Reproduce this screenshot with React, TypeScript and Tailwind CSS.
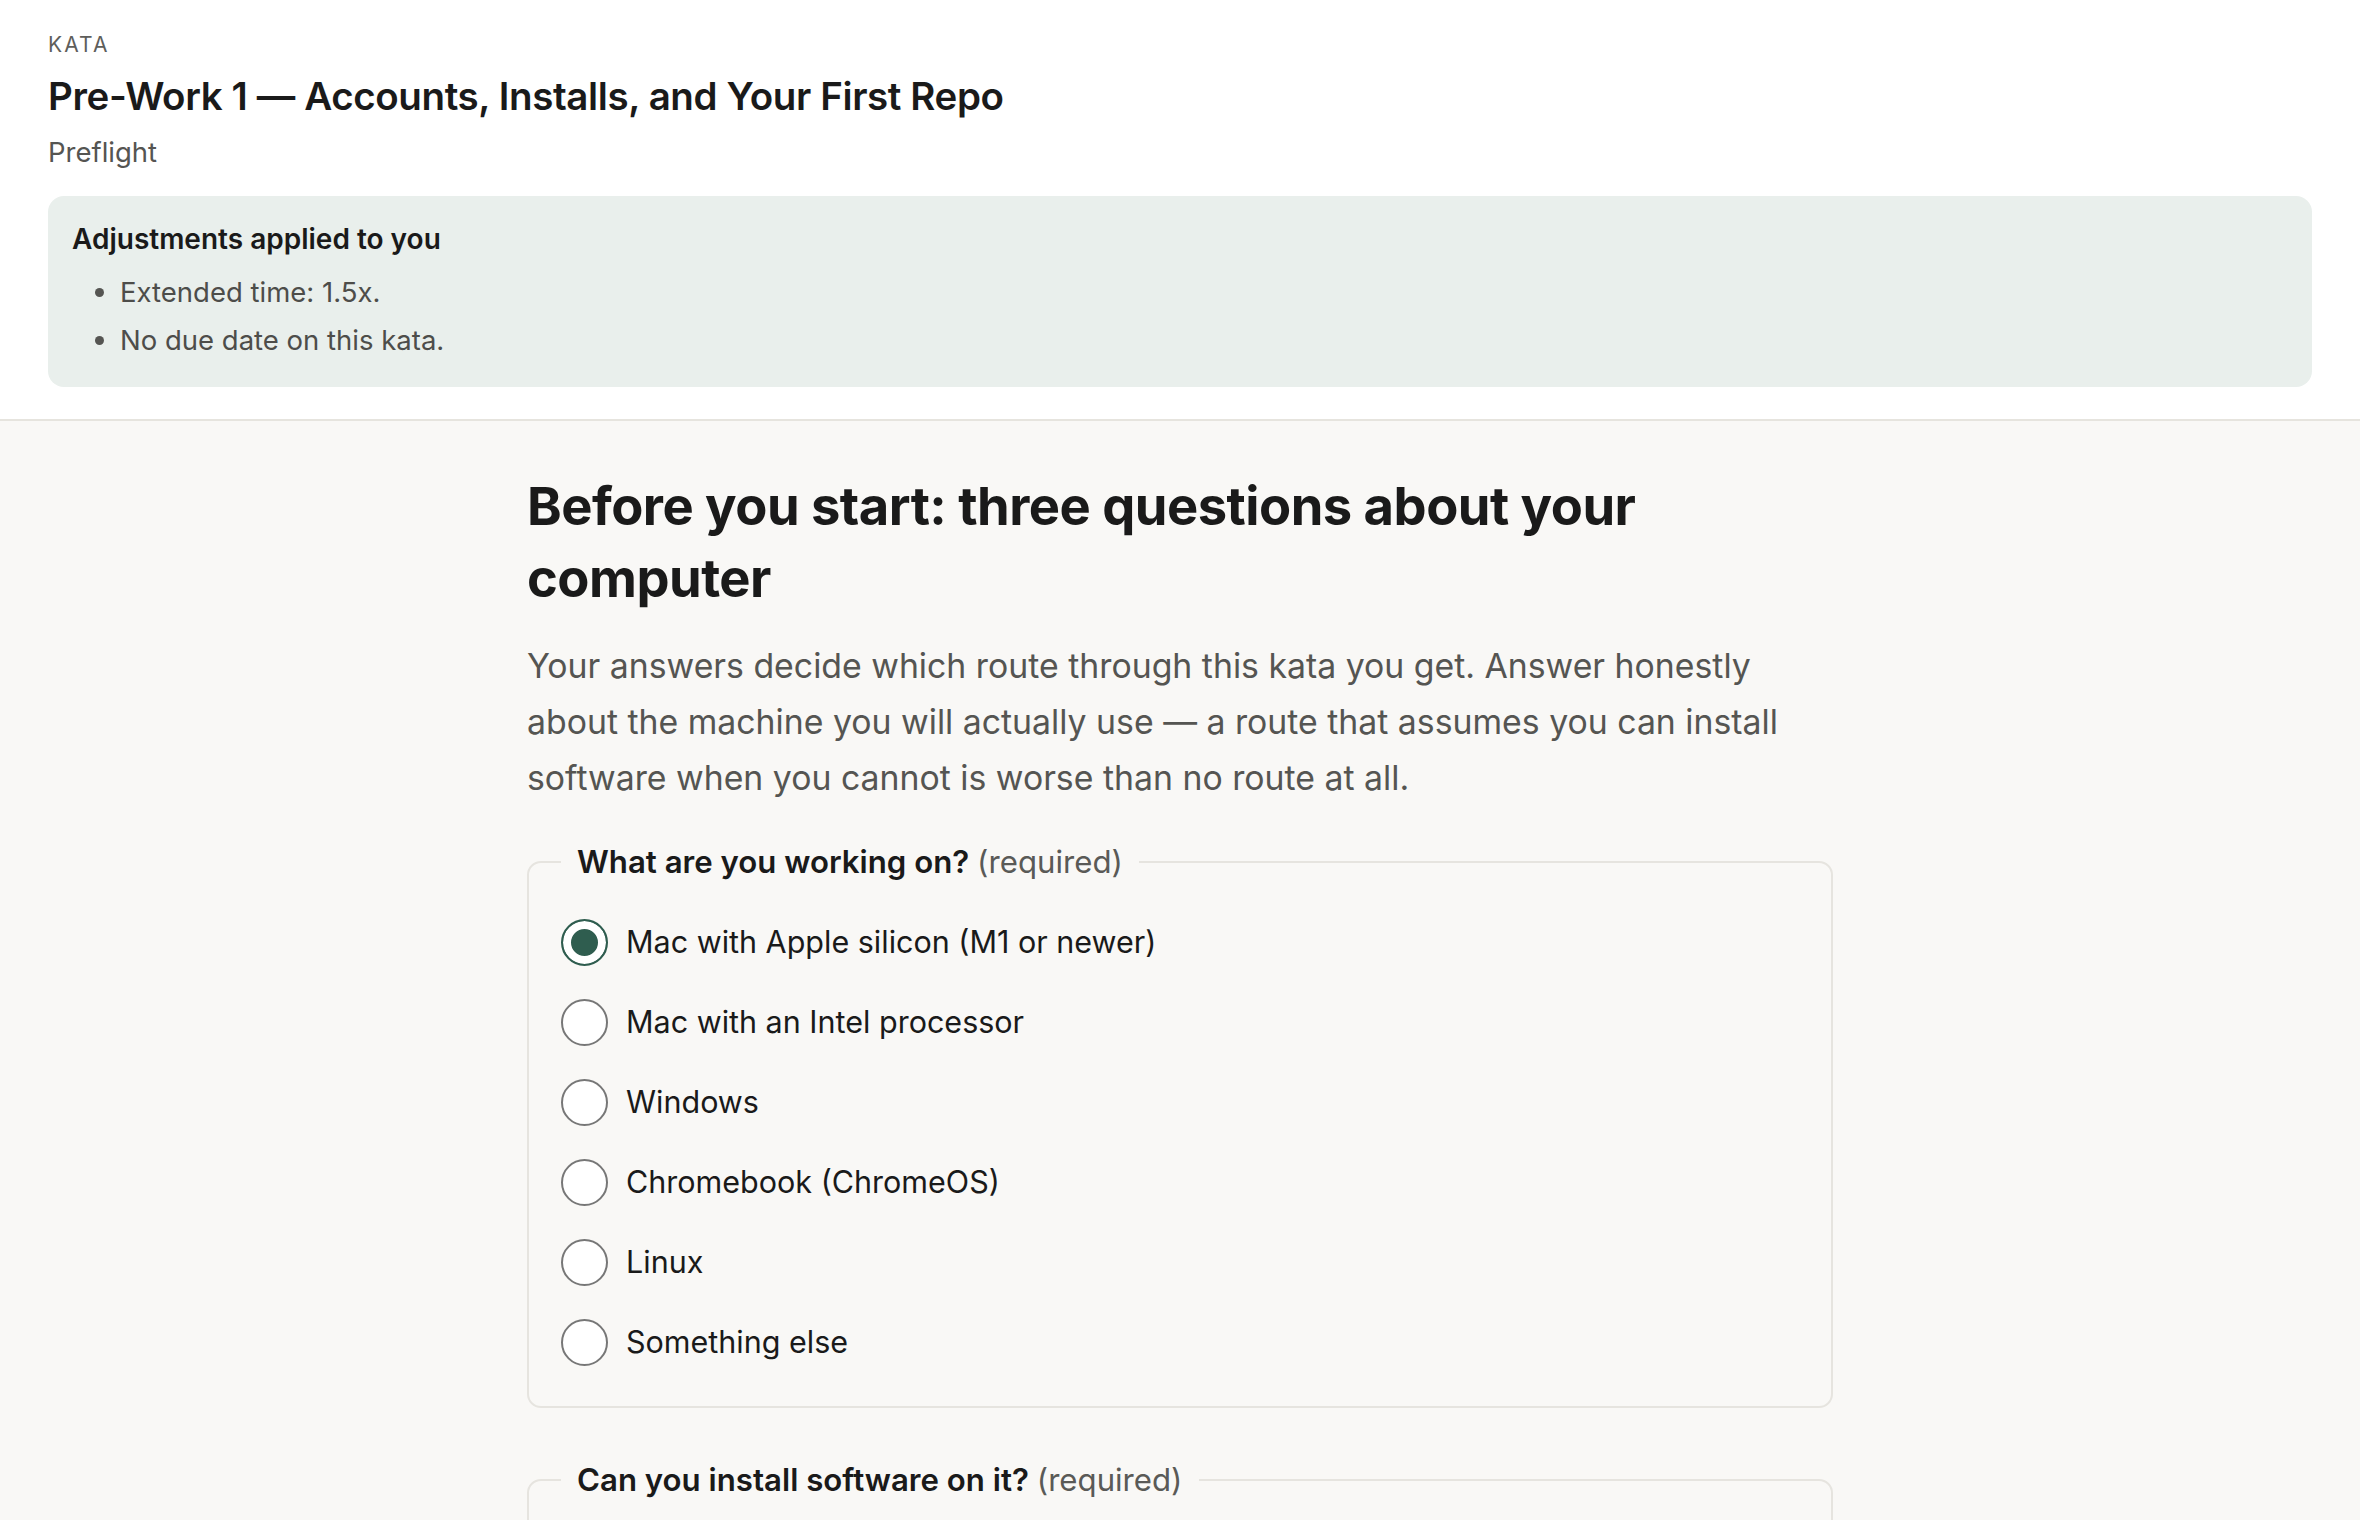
import { useState } from "react";

const MACHINES = [
  { id: "mac-arm", label: "Mac with Apple silicon (M1 or newer)" },
  { id: "mac-intel", label: "Mac with an Intel processor" },
  { id: "windows", label: "Windows" },
  { id: "chromebook", label: "Chromebook (ChromeOS)" },
  { id: "linux", label: "Linux" },
  { id: "other", label: "Something else" },
];

const INSTALL = [
  { id: "yes", label: "Yes, I can install anything" },
  { id: "some", label: "Only some things, or with help" },
  { id: "no", label: "No, it is managed by someone else" },
];

interface QuestionProps {
  name: string;
  title: string;
  options: { id: string; label: string }[];
  value: string;
  onChange: (id: string) => void;
}

function Question({ name, title, options, value, onChange }: QuestionProps) {
  return (
    <fieldset className="rounded-[14px] border-2 border-[#e6e4df] px-[32px] pt-[36px] pb-[40px]">
      <legend className="px-[16px] text-[31.2px] leading-[40px] font-semibold text-[#1a1a1a]">
        {title} <span className="font-normal text-[#5a5a57]">(required)</span>
      </legend>
      <div className="flex flex-col gap-[32px]">
        {options.map((opt) => (
          <label key={opt.id} className="flex h-[48px] cursor-pointer items-center gap-[18px]">
            <input
              type="radio"
              name={name}
              checked={value === opt.id}
              onChange={() => onChange(opt.id)}
              className="size-[47px] shrink-0 cursor-pointer appearance-none rounded-full border-2 border-[#777777] bg-white checked:border-[#2f5d4f] checked:bg-[#2f5d4f] checked:shadow-[inset_0_0_0_8px_#ffffff]"
            />
            <span className="text-[30.5px] leading-[40px] text-[#1a1a1a]">{opt.label}</span>
          </label>
        ))}
      </div>
    </fieldset>
  );
}

export default function App() {
  const [machine, setMachine] = useState("mac-arm");
  const [install, setInstall] = useState("");

  return (
    <div className="min-h-screen bg-[#f9f8f6] font-['Inter','Noto_Sans',sans-serif] antialiased">
      <header className="border-b-2 border-[#e6e4de] bg-white px-[48px] pt-[30px] pb-[32px]">
        <p className="text-[21px] leading-[30px] tracking-[0.1em] text-[#5e5e5b]">KATA</p>
        <h1 className="mt-[12px] text-[38.5px] leading-[48px] font-semibold tracking-[-0.01em] text-[#1a1a1a]">
          Pre-Work 1 — Accounts, Installs, and Your First Repo
        </h1>
        <p className="mt-[14px] text-[27.5px] leading-[36px] text-[#555552]">Preflight</p>

        <section className="mt-[26px] rounded-[16px] bg-[#e9efec] px-[24px] pt-[25px] pb-[23px]">
          <h2 className="text-[28px] leading-[36px] font-semibold text-[#1a1a1a]">
            Adjustments applied to you
          </h2>
          <ul className="mt-[11px] list-disc pl-[48px] text-[27.5px] leading-[48px] text-[#4d4d4a] marker:text-[#555552]">
            <li>Extended time: 1.5x.</li>
            <li>No due date on this kata.</li>
          </ul>
        </section>
      </header>

      <main className="mx-auto w-[1306px] pt-[49px] pb-[80px]">
        <h2 className="text-[52.5px] leading-[72px] font-bold tracking-[-0.01em] text-[#1a1a1a]">
          Before you start: three questions about your computer
        </h2>
        <p className="mt-[24px] max-w-[1260px] text-[33.8px] leading-[56px] text-[#555552]">
          Your answers decide which route through this kata you get. Answer honestly about the
          machine you will actually use — a route that assumes you can install software when you
          cannot is worse than no route at all.
        </p>

        <div className="mt-[36px] flex flex-col gap-[52px]">
          <Question
            name="machine"
            title="What are you working on?"
            options={MACHINES}
            value={machine}
            onChange={setMachine}
          />
          <Question
            name="install"
            title="Can you install software on it?"
            options={INSTALL}
            value={install}
            onChange={setInstall}
          />
        </div>
      </main>
    </div>
  );
}
